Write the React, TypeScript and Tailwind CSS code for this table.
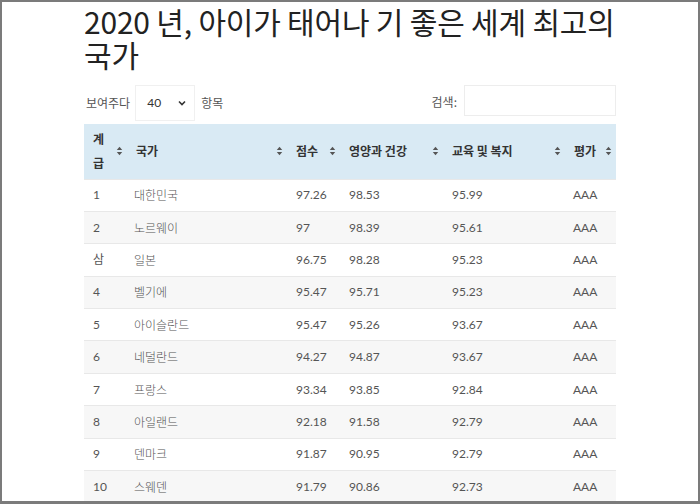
import React from 'react';

const rows = [
  { rank: '1', country: '대한민국', score: '97.26', health: '98.53', edu: '95.99', grade: 'AAA' },
  { rank: '2', country: '노르웨이', score: '97', health: '98.39', edu: '95.61', grade: 'AAA' },
  { rank: '삼', country: '일본', score: '96.75', health: '98.28', edu: '95.23', grade: 'AAA' },
  { rank: '4', country: '벨기에', score: '95.47', health: '95.71', edu: '95.23', grade: 'AAA' },
  { rank: '5', country: '아이슬란드', score: '95.47', health: '95.26', edu: '93.67', grade: 'AAA' },
  { rank: '6', country: '네덜란드', score: '94.27', health: '94.87', edu: '93.67', grade: 'AAA' },
  { rank: '7', country: '프랑스', score: '93.34', health: '93.85', edu: '92.84', grade: 'AAA' },
  { rank: '8', country: '아일랜드', score: '92.18', health: '91.58', edu: '92.79', grade: 'AAA' },
  { rank: '9', country: '덴마크', score: '91.87', health: '90.95', edu: '92.79', grade: 'AAA' },
  { rank: '10', country: '스웨덴', score: '91.79', health: '90.86', edu: '92.73', grade: 'AAA' },
];

const SortIcon = () => (
  <svg width="7" height="10" viewBox="0 0 7 10" className="shrink-0">
    <path d="M3.5 0.8 L6.2 4 L0.8 4 Z" fill="#555" />
    <path d="M3.5 9.2 L6.2 6 L0.8 6 Z" fill="#555" />
  </svg>
);

const font = "font-['Lato','Noto_Sans_CJK_KR',sans-serif]";

export default function App() {
  const headers = [
    { label: '계급', w: 'w-[43px]', lw: 'w-[14px] flex-none mr-auto' },
    { label: '국가', w: 'w-[160px]', lw: 'flex-1' },
    { label: '점수', w: 'w-[53px]', lw: 'flex-1' },
    { label: '영양과 건강', w: 'w-[103px]', lw: 'flex-1' },
    { label: '교육 및 복지', w: 'w-[122px]', lw: 'flex-1' },
    { label: '평가', w: 'w-[51px]', lw: 'flex-1' },
  ];

  return (
    <div className="w-[700px] h-[504px] overflow-hidden border-2 border-b-[3px] border-[#7b7b7b] bg-white">
      <div className={`ml-[82px] w-[532px] ${font}`}>
        <h1 className="mt-[3px] text-[30px] leading-[33px] text-[#222] font-['Noto_Sans_CJK_KR',sans-serif] font-normal tracking-[-0.2px]">
          2020 년, 아이가 태어나 기 좋은 세계 최고의 국가
        </h1>

        <div className="mt-[14px] flex items-center h-[36px] text-[12px] text-[#555]">
          <span className="font-['Noto_Sans_CJK_KR',sans-serif] mr-[3px] ml-[2px]">보여주다</span>
          <div className="ml-[2px] w-[60px] h-[36px] border border-[#f0f0f0] bg-white flex items-center justify-between pl-[11px] pr-[8px]">
            <span className="text-[12px] text-[#333]">40</span>
            <svg width="8" height="6" viewBox="0 0 8 6">
              <path d="M1 1.5 L4 4.5 L7 1.5" stroke="#333" strokeWidth="1.6" fill="none" />
            </svg>
          </div>
          <span className="font-['Noto_Sans_CJK_KR',sans-serif] ml-[6px]">항목</span>
          <div className="ml-auto flex items-center gap-[7px] self-start">
            <span className="font-['Noto_Sans_CJK_KR',sans-serif] mt-[2px]">검색:</span>
            <div className="w-[152px] h-[31px] border border-[#ededed] bg-white" />
          </div>
        </div>

        <table className="mt-[3px] w-[532px] table-fixed border-collapse text-[12px]">
          <thead>
            <tr className="bg-[#d9eaf4] h-[55px]">
              {headers.map((h, i) => (
                <th key={i} className={`${h.w} p-0 text-left align-middle font-bold text-[#333]`}>
                  <div className="flex items-center pl-[9px] pr-[4px]">
                    <span className={`${h.lw} min-w-0 leading-[24px] font-['Noto_Sans_CJK_KR',sans-serif] break-all`}>
                      {h.label}
                    </span>
                    <SortIcon />
                  </div>
                </th>
              ))}
            </tr>
          </thead>
          <tbody>
            {rows.map((r, i) => (
              <tr
                key={i}
                className={`h-[32.4px] text-[#555] border-t border-[#e8e8e8] ${i % 2 === 1 ? 'bg-[#f7f7f7]' : 'bg-white'}`}
              >
                <td className="pl-[9px]">{r.rank}</td>
                <td className="pl-[7px] font-['Noto_Sans_CJK_KR',sans-serif] font-light">{r.country}</td>
                <td className="pl-[9px]">{r.score}</td>
                <td className="pl-[9px]">{r.health}</td>
                <td className="pl-[9px]">{r.edu}</td>
                <td className="pl-[8px]">{r.grade}</td>
              </tr>
            ))}
          </tbody>
        </table>
      </div>
    </div>
  );
}
